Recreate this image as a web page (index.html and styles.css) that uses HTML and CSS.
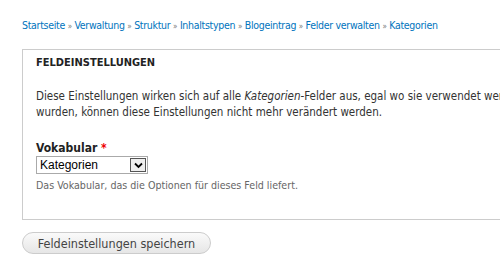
FILE: index.html
```html
<!DOCTYPE html>
<html>
	<head>
		<meta charset="UTF-8">
		<title>Kategorien</title>
		<link rel="stylesheet" href="styles.css">
	</head>
	<body>
		<div class="breadcrumb">
			<a href="#">Startseite</a> <span class="sep">»</span>
			<a href="#">Verwaltung</a> <span class="sep">»</span>
			<a href="#">Struktur</a> <span class="sep">»</span>
			<a href="#">Inhaltstypen</a> <span class="sep">»</span>
			<a href="#">Blogeintrag</a> <span class="sep">»</span>
			<a href="#">Felder verwalten</a> <span class="sep">»</span>
			<a href="#">Kategorien</a>
		</div>
		<div class="fieldset">
			<div class="legend">FELDEINSTELLUNGEN</div>
			<p class="intro">Diese Einstellungen wirken sich auf alle <em>Kategorien</em>-Felder aus, egal wo sie verwendet werden. Nachdem Daten erstellt<br>wurden, können diese Einstellungen nicht mehr verändert werden.</p>
			<div class="item">
				<label>Vokabular <span class="req">*</span></label>
				<div class="select">
					<span class="value">Kategorien</span>
					<span class="arrow">
						<svg width="11" height="9" viewBox="0 0 11 9"><path d="M2 2.5 L5.5 6 L9 2.5" fill="none" stroke="#000" stroke-width="1.8"/></svg>
					</span>
				</div>
				<div class="desc">Das Vokabular, das die Optionen für dieses Feld liefert.</div>
			</div>
		</div>
		<button type="button" class="save">Feldeinstellungen speichern</button>
	</body>
</html>
```

FILE: styles.css
```css
html, body{
	margin: 0;
	background: #fff;
	overflow: hidden;
}
body{
	padding: 17px 0 0 22px;
	font-family: "DejaVu Sans Condensed", "DejaVu Sans", sans-serif;
	color: #333;
	font-size: 12px;
}
.breadcrumb{
	font-size: 10.5px;
	letter-spacing: -0.3px;
	line-height: 16px;
	white-space: nowrap;
}
.breadcrumb a{
	color: #0074bd;
	text-decoration: none;
}
.breadcrumb .sep{
	color: #777;
	font-size: 8px;
}
.fieldset{
	margin-top: 14px;
	width: 540px;
	height: 171px;
	border: 1px solid #ccc;
	padding: 0 13px;
	box-sizing: border-box;
}
.legend{
	font-weight: bold;
	font-size: 11px;
	margin-top: 5px;
	line-height: 16px;
	color: #222;
}
.intro{
	margin: 17px 0 0;
	font-size: 11.5px;
	line-height: 16px;
	white-space: nowrap;
}
.item{
	margin-top: 21px;
}
.item label{
	display: block;
	font-weight: bold;
	line-height: 14px;
	color: #222;
}
.req{
	color: #e00;
}
.select{
	margin-top: 1px;
	width: 112px;
	height: 18px;
	border: 1px solid #aaa;
	box-sizing: border-box;
	display: flex;
	align-items: center;
	justify-content: space-between;
	font-family: "Liberation Sans", sans-serif;
	font-size: 12px;
	color: #000;
	padding-left: 3px;
}
.arrow{
	width: 16px;
	height: 14px;
	border: 1px solid #555;
	background: #eee;
	display: flex;
	align-items: center;
	justify-content: center;
	margin-right: 1px;
	box-sizing: border-box;
}
.desc{
	margin-top: 4px;
	font-size: 10.6px;
	color: #666;
	line-height: 14px;
}
.save{
	margin-top: 12px;
	width: 189px;
	height: 22px;
	border: 1px solid #ccc;
	border-radius: 11px;
	background: linear-gradient(#fafafa, #e6e6e6);
	font-family: "DejaVu Sans Condensed", "DejaVu Sans", sans-serif;
	font-size: 12.5px;
	color: #444;
	padding: 0;
}
```
